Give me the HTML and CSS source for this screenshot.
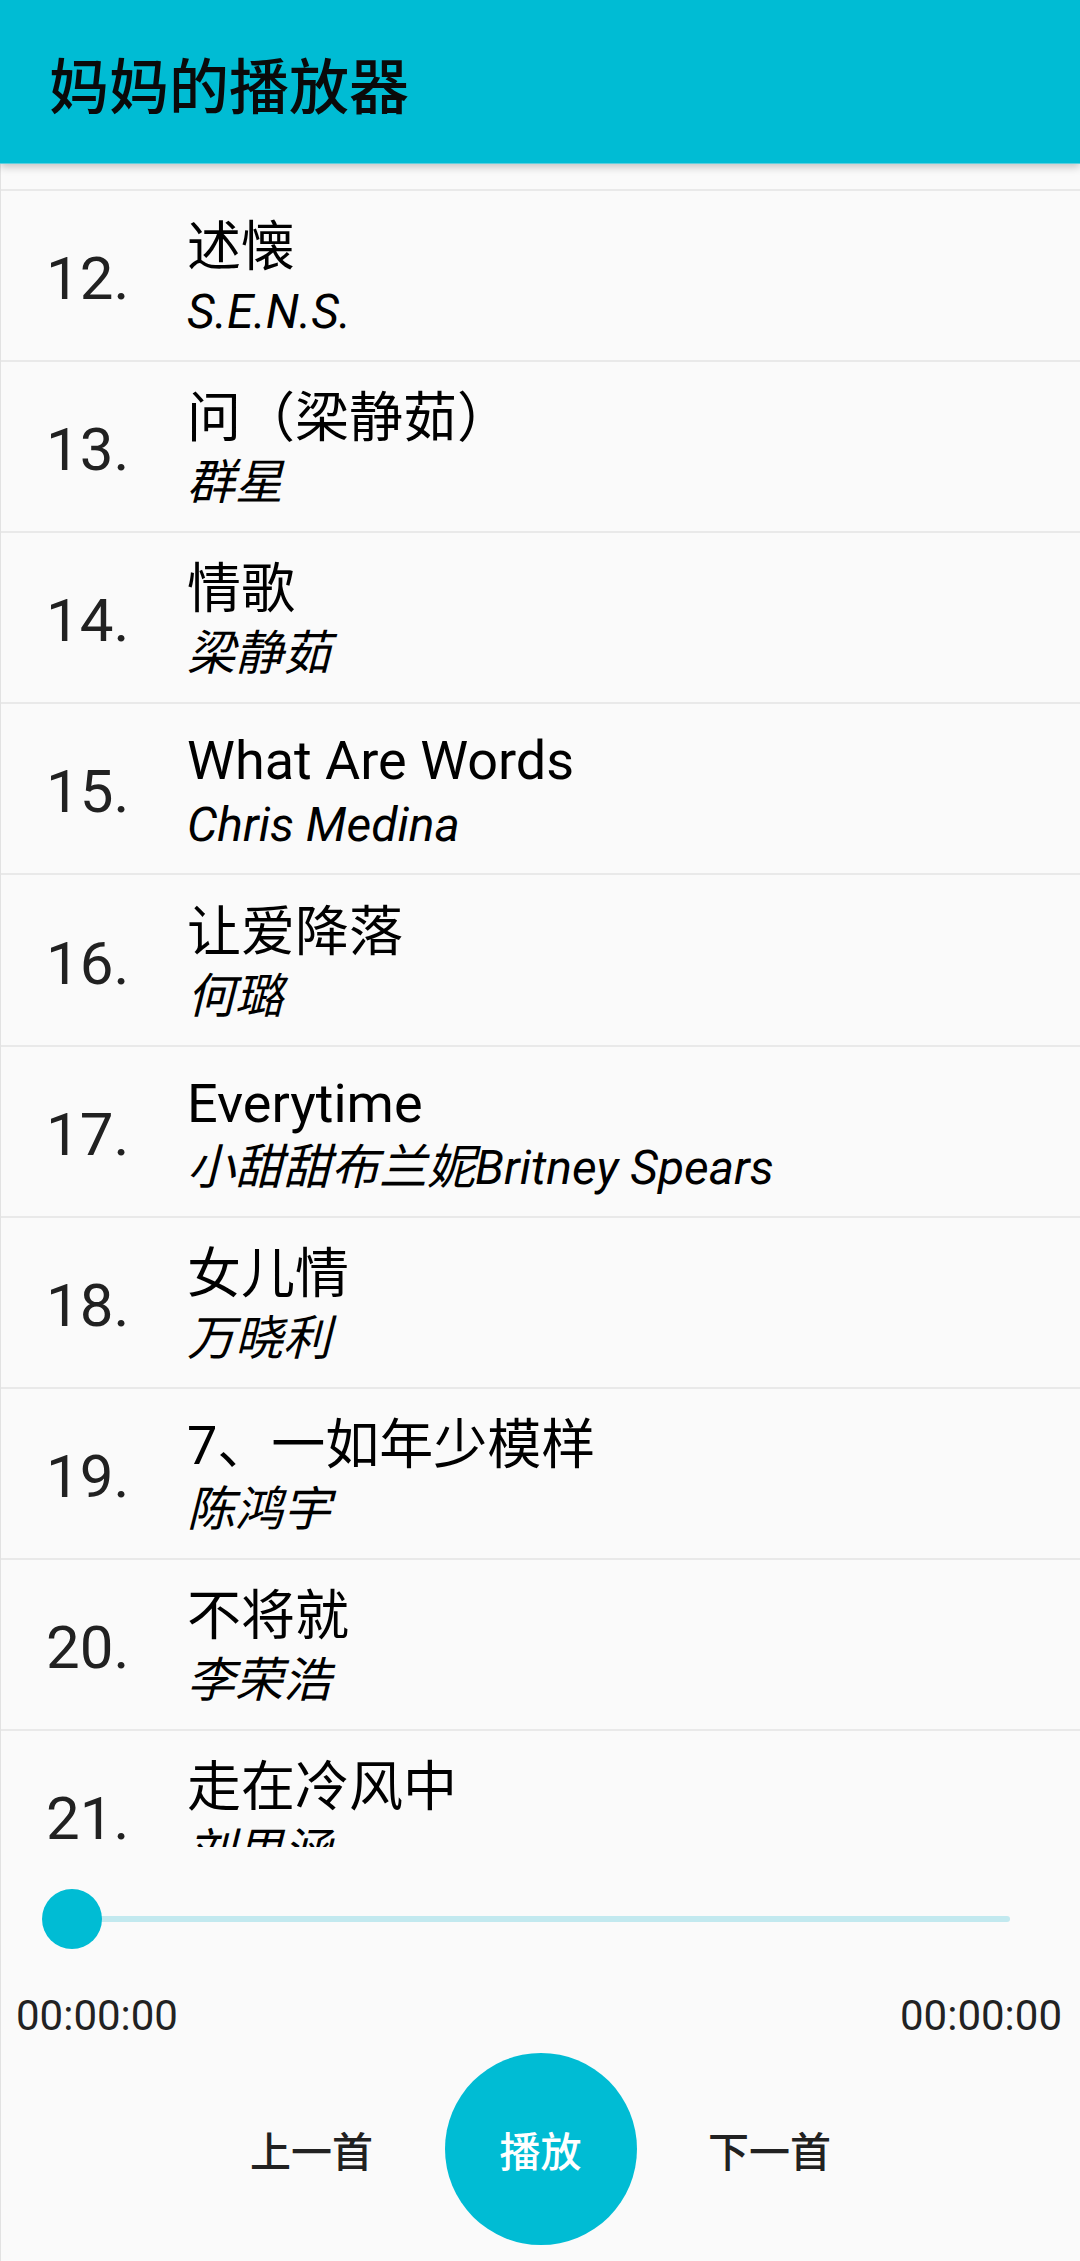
FILE: index.html
```html
<!DOCTYPE html>
<html lang="zh-CN">
<head>
<meta charset="utf-8">
<title>妈妈的播放器</title>
<link rel="stylesheet" href="styles.css">
</head>
<body>
<div class="app">
  <header class="toolbar">
    <h1 class="toolbar-title">妈妈的播放器</h1>
  </header>
  <main class="content">
    <div class="list-viewport">
      <ul class="song-list">
        <li class="row"><span class="num">11.</span><div class="info"><div class="song">晴天</div><div class="artist">周杰伦</div></div></li>
        <li class="row"><span class="num">12.</span><div class="info"><div class="song">述懐</div><div class="artist">S.E.N.S.</div></div></li>
        <li class="row"><span class="num">13.</span><div class="info"><div class="song">问（梁静茹）</div><div class="artist">群星</div></div></li>
        <li class="row"><span class="num">14.</span><div class="info"><div class="song">情歌</div><div class="artist">梁静茹</div></div></li>
        <li class="row"><span class="num">15.</span><div class="info"><div class="song">What Are Words</div><div class="artist">Chris Medina</div></div></li>
        <li class="row"><span class="num">16.</span><div class="info"><div class="song">让爱降落</div><div class="artist">何璐</div></div></li>
        <li class="row"><span class="num">17.</span><div class="info"><div class="song">Everytime</div><div class="artist">小甜甜布兰妮Britney Spears</div></div></li>
        <li class="row"><span class="num">18.</span><div class="info"><div class="song">女儿情</div><div class="artist">万晓利</div></div></li>
        <li class="row"><span class="num">19.</span><div class="info"><div class="song">7、一如年少模样</div><div class="artist">陈鸿宇</div></div></li>
        <li class="row"><span class="num">20.</span><div class="info"><div class="song">不将就</div><div class="artist">李荣浩</div></div></li>
        <li class="row"><span class="num">21.</span><div class="info"><div class="song">走在冷风中</div><div class="artist">刘思涵</div></div></li>
        <li class="row"><span class="num">22.</span><div class="info"><div class="song">成都</div><div class="artist">赵雷</div></div></li>
      </ul>
    </div>
    <section class="player">
      <div class="seek">
        <div class="thumb"></div>
        <div class="track"></div>
      </div>
      <div class="times">
        <span class="time">00:00:00</span>
        <span class="time">00:00:00</span>
      </div>
      <div class="controls">
        <button class="btn btn-side">上一首</button>
        <button class="btn btn-play">播放</button>
        <button class="btn btn-side">下一首</button>
      </div>
    </section>
  </main>
</div>
</body>
</html>
```
FILE: styles.css
```css
* {
  box-sizing: border-box;
}

html, body {
  margin: 0;
  padding: 0;
}

body {
  width: 1080px;
  height: 2261px;
  overflow: hidden;
  background: #fafafa;
  font-family: "Roboto", "Noto Sans CJK SC", sans-serif;
  color: #000;
  text-spacing-trim: space-all;
}

.app {
  display: flex;
  flex-direction: column;
  height: 2261px;
}

.toolbar {
  position: relative;
  z-index: 2;
  flex: 0 0 164px;
  height: 164px;
  background: #00bcd4;
  display: flex;
  align-items: center;
  padding-left: 49px;
  box-shadow: 0 3px 8px rgba(0, 0, 0, 0.22);
  border-bottom: 1px solid #5fcfde;
}

.toolbar-title {
  margin: 0;
  padding-top: 2px;
  font-family: "Noto Sans CJK SC", "Roboto", sans-serif;
  font-size: 60px;
  font-weight: 500;
  line-height: 70px;
  color: #0a0a0a;
}

.content {
  flex: 1;
  display: flex;
  flex-direction: column;
  border-left: 1px solid #e2e2e2;
}

.list-viewport {
  flex: 0 0 1683px;
  height: 1683px;
  overflow: hidden;
}

.song-list {
  list-style: none;
  margin: -144px 0 0 0;
  padding: 0;
}

.row {
  display: flex;
  align-items: center;
  height: 171.1px;
  border-bottom: 2px solid #e9e9e9;
}

.num {
  flex: 0 0 186px;
  padding-left: 45px;
  padding-top: 7px;
  font-size: 60px;
  line-height: 70px;
  color: #212121;
}

.info {
  display: flex;
  flex-direction: column;
  padding-top: 5px;
}

.song {
  font-size: 54px;
  line-height: 68px;
  color: #000;
  white-space: nowrap;
}

.artist {
  font-size: 48px;
  line-height: 60px;
  font-style: italic;
  color: #000;
  white-space: nowrap;
}

.player {
  flex: 1;
  display: flex;
  flex-direction: column;
}

.seek {
  display: flex;
  align-items: center;
  height: 60px;
  margin-top: 42px;
  padding-left: 41px;
  padding-right: 70px;
}

.thumb {
  position: relative;
  z-index: 1;
  flex: 0 0 60px;
  height: 60px;
  border-radius: 50%;
  background: #00bcd4;
}

.track {
  flex: 1;
  height: 6px;
  margin-left: -6px;
  border-radius: 3px;
  background: #c2e9ef;
}

.times {
  display: flex;
  justify-content: space-between;
  margin-top: 42px;
  padding: 0 18px 0 15px;
}

.time {
  font-size: 42px;
  line-height: 50px;
  color: #222;
}

.controls {
  display: flex;
  justify-content: center;
  align-items: center;
  margin-top: 12px;
}

.btn {
  border: none;
  padding: 0;
  margin: 0;
  background: transparent;
  font-family: "Noto Sans CJK SC", "Roboto", sans-serif;
  font-size: 41px;
  font-weight: 500;
  line-height: 48px;
}

.btn-side {
  flex: 0 0 266px;
  height: 192px;
  color: #212121;
}

.btn-play {
  flex: 0 0 192px;
  width: 192px;
  height: 192px;
  border-radius: 50%;
  background: #00bcd4;
  color: #fff;
}
```
